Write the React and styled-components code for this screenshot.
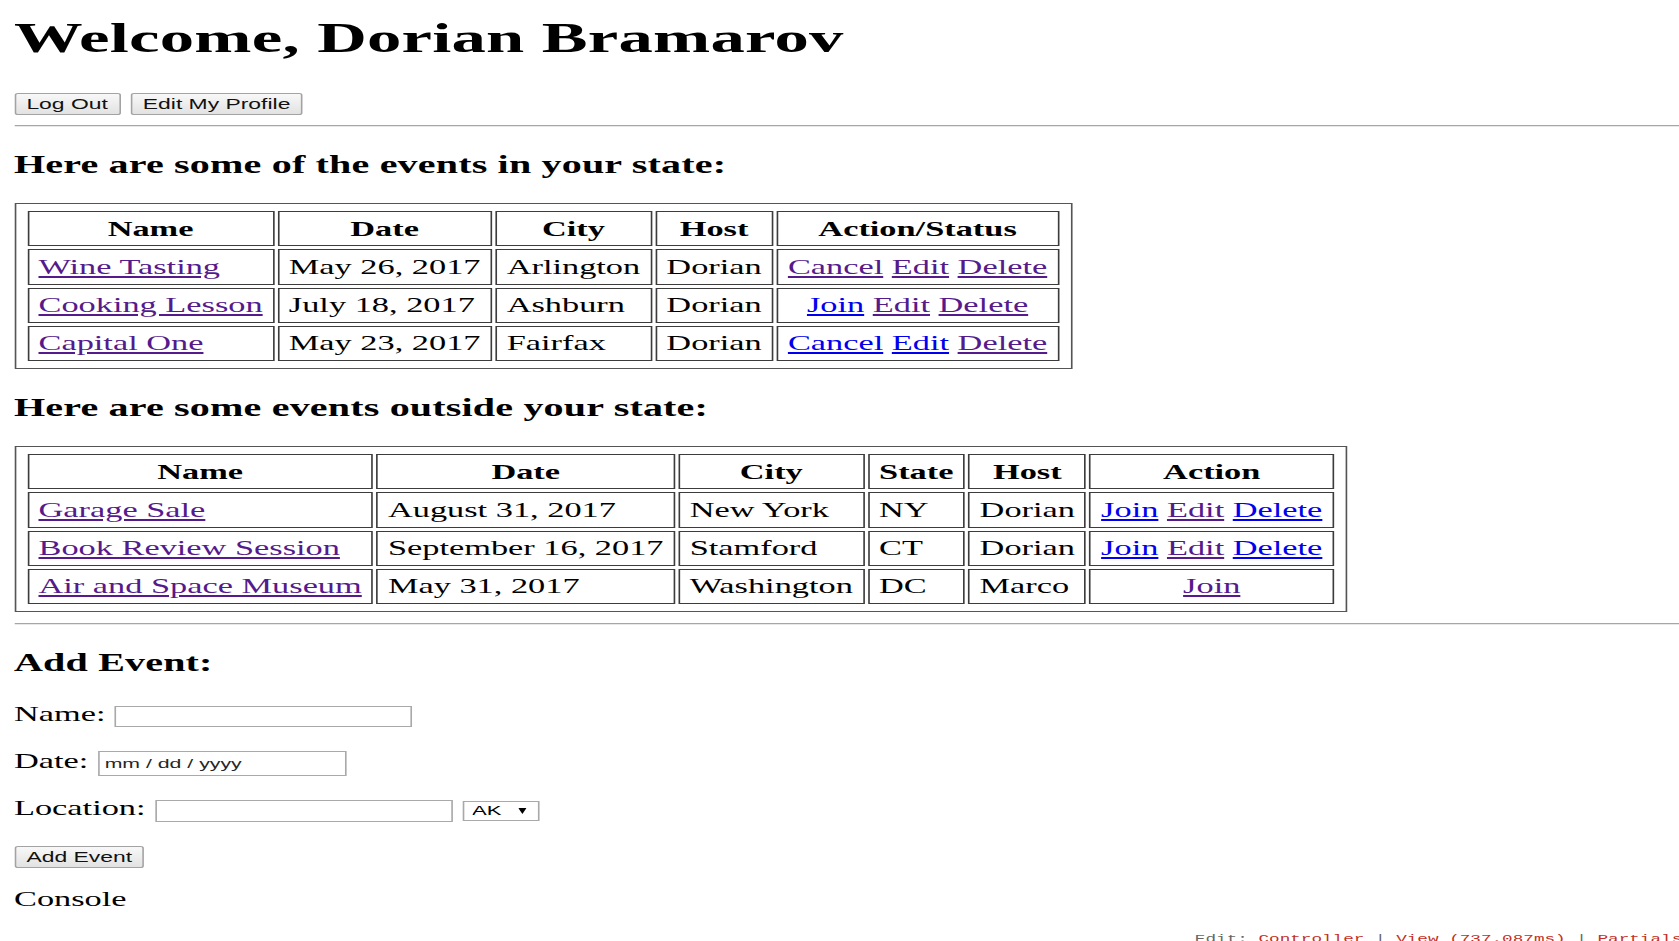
import React from 'react'
import styled, { createGlobalStyle } from 'styled-components'

// the whole page is drawn wide: glyphs, borders and gaps are stretched sideways
const STRETCH = 1.635

const GlobalStyle = createGlobalStyle`
  html, body {
    margin: 0;
    padding: 0;
    overflow: hidden;
    background: #ffffff;
  }
`

const Page = styled.div`
  width: calc(100vw / ${STRETCH});
  box-sizing: border-box;
  padding-left: 8.56px;
  transform: scaleX(${STRETCH});
  transform-origin: 0 0;
  font-family: 'Liberation Serif', 'Times New Roman', serif;
  font-size: 21px;
  color: #000;
`

const Title = styled.h1`
  margin: 14px 0 0;
  font-size: 42px;
  font-weight: bold;
  letter-spacing: 0.13px;
  line-height: normal;
`

const ButtonRow = styled.div`
  display: flex;
  gap: 6.2px;
  margin-top: 31px;
`

const Button = styled.button`
  height: ${(p) => p.$h || 22}px;
  box-sizing: border-box;
  padding: 0 6.6px;
  border: 1px solid #a3a3a3;
  border-radius: 2px;
  background: linear-gradient(#f8f8f8, #e2e2e2);
  font-family: 'Liberation Sans', Arial, sans-serif;
  font-size: 14px;
  line-height: 18px;
  color: #111;
`

const Rule = styled.hr`
  height: 0;
  margin: ${(p) => p.$top}px 0 0;
  border: 0;
  border-top: 1px solid #a6a6a6;
  border-bottom: 1px solid #e8e8e8;
`

const SectionTitle = styled.h3`
  margin: 24.2px 0 24.3px;
  font-size: 24.5px;
  font-weight: bold;
  letter-spacing: 0.1px;
  line-height: normal;
`

const EventTable = styled.table`
  border: 1px solid #555;
  border-collapse: separate;
  border-spacing: 2.8px 3px;
  padding: 4.3px 5px;
`

const Th = styled.th`
  padding: 4.5px 6px;
  border: 1px solid #3c3c3c;
  font-weight: bold;
  text-align: center;
  line-height: 24.2px;
  white-space: nowrap;
`

const Td = styled.td`
  padding: 4.5px 6px;
  border: 1px solid #3c3c3c;
  text-align: ${(p) => (p.$center ? 'center' : 'left')};
  line-height: 24.2px;
  white-space: nowrap;
`

const Link = styled.a`
  color: ${(p) => (p.$visited ? '#551a8b' : '#0000ee')};
  text-decoration: underline;
  text-decoration-thickness: 2px;
  text-underline-offset: 2px;
  cursor: pointer;
`

const Form = styled.form`
  display: flex;
  flex-direction: column;
  align-items: flex-start;
`

const FormRow = styled.div`
  display: flex;
  align-items: center;
  gap: 5.7px;
  margin-bottom: 18.4px;
`

const Label = styled.label`
  padding-bottom: 4px;
  line-height: normal;
`

const TextInput = styled.input`
  width: ${(p) => p.$w}px;
  height: ${(p) => p.$h}px;
  box-sizing: border-box;
  margin: 0;
  padding: 0 0 0 3.3px;
  border: 1px solid #a9a9a9;
  background: #fff;
  font-family: 'Liberation Sans', Arial, sans-serif;
  font-size: 13px;
  color: #222;
  outline: none;

  &::placeholder {
    color: #262626;
  }
`

const SelectWrap = styled.div`
  position: relative;
  display: flex;
`

const Select = styled.select`
  width: 47.8px;
  height: 20.5px;
  box-sizing: border-box;
  margin: 0;
  padding: 0 0 0 5.2px;
  appearance: none;
  border: 1px solid #a9a9a9;
  border-radius: 0;
  background: #fff;
  font-family: 'Liberation Sans', Arial, sans-serif;
  font-size: 13.5px;
  color: #000;
`

const Arrow = styled.svg`
  position: absolute;
  right: 8.4px;
  top: 50%;
  transform: translateY(-50%);
  pointer-events: none;
`

const SubmitRow = styled.div`
  display: flex;
  margin-top: 2.4px;
`

const Console = styled.p`
  margin: 19px 0 0;
  line-height: normal;
`

const Footer = styled.div`
  margin: 21.5px -2px 0 0;
  text-align: right;
  white-space: nowrap;
  font-family: 'Liberation Mono', 'Courier New', monospace;
  font-size: 10.8px;
  color: #666;
`

const FooterLink = styled.span`
  color: #c52f24;
`

const localEvents = [
  {
    name: 'Wine Tasting',
    date: 'May 26, 2017',
    city: 'Arlington',
    host: 'Dorian',
    actions: [['Cancel', true], ['Edit', true], ['Delete', true]],
  },
  {
    name: 'Cooking Lesson',
    date: 'July 18, 2017',
    city: 'Ashburn',
    host: 'Dorian',
    actions: [['Join', false], ['Edit', true], ['Delete', true]],
  },
  {
    name: 'Capital One',
    date: 'May 23, 2017',
    city: 'Fairfax',
    host: 'Dorian',
    actions: [['Cancel', false], ['Edit', false], ['Delete', true]],
  },
]

const otherEvents = [
  {
    name: 'Garage Sale',
    date: 'August 31, 2017',
    city: 'New York',
    state: 'NY',
    host: 'Dorian',
    actions: [['Join', false], ['Edit', true], ['Delete', false]],
  },
  {
    name: 'Book Review Session',
    date: 'September 16, 2017',
    city: 'Stamford',
    state: 'CT',
    host: 'Dorian',
    actions: [['Join', false], ['Edit', true], ['Delete', false]],
  },
  {
    name: 'Air and Space Museum',
    date: 'May 31, 2017',
    city: 'Washington',
    state: 'DC',
    host: 'Marco',
    actions: [['Join', true]],
  },
]

function Actions({ list }) {
  return list.map(([label, visited], i) => (
    <React.Fragment key={label}>
      {i > 0 && ' '}
      <Link $visited={visited}>{label}</Link>
    </React.Fragment>
  ))
}

export default function App() {
  return (
    <Page>
      <GlobalStyle />
      <Title>Welcome, Dorian Bramarov</Title>
      <ButtonRow>
        <Button>Log Out</Button>
        <Button>Edit My Profile</Button>
      </ButtonRow>
      <Rule $top={9.5} />

      <SectionTitle>Here are some of the events in your state:</SectionTitle>
      <EventTable>
        <tbody>
          <tr>
            <Th>Name</Th>
            <Th>Date</Th>
            <Th>City</Th>
            <Th>Host</Th>
            <Th>Action/Status</Th>
          </tr>
          {localEvents.map((e) => (
            <tr key={e.name}>
              <Td><Link $visited>{e.name}</Link></Td>
              <Td>{e.date}</Td>
              <Td>{e.city}</Td>
              <Td>{e.host}</Td>
              <Td $center><Actions list={e.actions} /></Td>
            </tr>
          ))}
        </tbody>
      </EventTable>

      <SectionTitle>Here are some events outside your state:</SectionTitle>
      <EventTable>
        <tbody>
          <tr>
            <Th>Name</Th>
            <Th>Date</Th>
            <Th>City</Th>
            <Th>State</Th>
            <Th>Host</Th>
            <Th>Action</Th>
          </tr>
          {otherEvents.map((e) => (
            <tr key={e.name}>
              <Td><Link $visited>{e.name}</Link></Td>
              <Td>{e.date}</Td>
              <Td>{e.city}</Td>
              <Td>{e.state}</Td>
              <Td>{e.host}</Td>
              <Td $center><Actions list={e.actions} /></Td>
            </tr>
          ))}
        </tbody>
      </EventTable>
      <Rule $top={10.8} />

      <SectionTitle>Add Event:</SectionTitle>
      <Form onSubmit={(ev) => ev.preventDefault()}>
        <FormRow>
          <Label>Name:</Label>
          <TextInput $w={181.4} $h={21} />
        </FormRow>
        <FormRow>
          <Label>Date:</Label>
          <TextInput $w={152.3} $h={24.3} placeholder="mm / dd / yyyy" />
        </FormRow>
        <FormRow>
          <Label>Location:</Label>
          <TextInput $w={182.1} $h={21.7} />
          <SelectWrap>
            <Select defaultValue="AK">
              <option value="AK">AK</option>
              <option value="AL">AL</option>
              <option value="VA">VA</option>
            </Select>
            <Arrow width="5" height="6" viewBox="0 0 8 5" preserveAspectRatio="none">
              <polygon points="0,0 8,0 4,5" fill="#000" />
            </Arrow>
          </SelectWrap>
        </FormRow>
        <SubmitRow>
          <Button type="submit" $h={21.7}>Add Event</Button>
        </SubmitRow>
      </Form>
      <Console>Console</Console>

      <Footer>
        Edit: <FooterLink>Controller</FooterLink> | <FooterLink>View (737.087ms)</FooterLink> | <FooterLink>Partials</FooterLink>
      </Footer>
    </Page>
  )
}
